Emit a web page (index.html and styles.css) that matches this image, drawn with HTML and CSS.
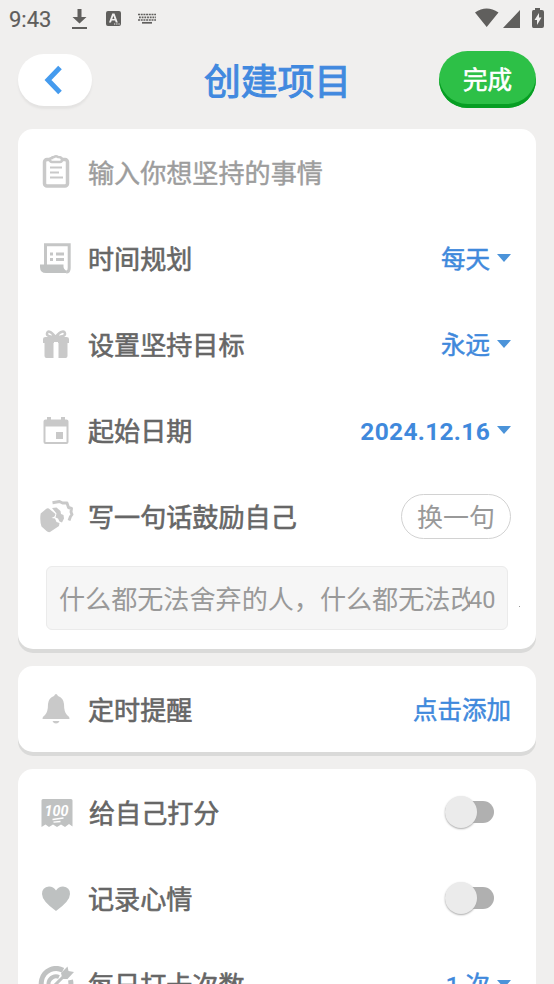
FILE: index.html
```html
<!DOCTYPE html>
<html lang="zh-CN">
<head>
<meta charset="utf-8">
<title>创建项目</title>
<link rel="stylesheet" href="styles.css">
</head>
<body>
<div class="screen">
  <div class="status">
    <span class="clock">9:43</span>
    <svg class="status-left" width="90" height="24" viewBox="0 0 90 24">
      <g fill="#605f5d">
        <path d="M5.500 2h4v8h5L7.500 16.500.5 10h5zM0 20h15v2H0z"/>
        <path fill-rule="evenodd" d="M36 4h11q2 0 2 2v11q0 2-2 2H36q-2 0-2-2V6q0-2 2-2zm4.300 2.500L37 15.500h2l.7-2h3.400l.7 2h2L42.500 6.500zm1.100 2.200 1.100 3.300h-2.200zM42 16.500v1.100h1.300v-1.100zm2.200 0v1.100h1.300v-1.100zm2.200 0v1.100h1.300v-1.100z"/>
      </g>
      <g fill="none" stroke="#605f5d" stroke-width="1.700">
        <path d="M66 7.500h18M66 13h18" stroke-dasharray="2 .7"/>
        <path d="M67 10.300h17" stroke-dasharray="1.800 .9"/>
        <path d="M70 15.800h10"/>
      </g>
    </svg>
    <svg class="status-right" width="72" height="24" viewBox="0 0 72 24">
      <g fill="#605f5d">
        <path d="M0 6.500Q11.500-1.500 23.500 6.500L11.700 21zM28 22 45 4v18z"/>
        <path fill-rule="evenodd" d="M60 2h5v2h2q2 0 2 2v14q0 2-2 2h-8.500q-1.500 0-1.500-2V6q0-2 1.500-2H60zm4 5-4.500 7h2.500v5l4.500-7.500H64z"/>
      </g>
    </svg>
  </div>

  <header class="header">
    <div class="back"><svg width="20" height="30" viewBox="0 0 20 30"><path d="M16 2.500 4 15l12 12.500" fill="none" stroke="#459bee" stroke-width="5"/></svg></div>
    <h1 class="title">创建项目</h1>
    <div class="done">完成</div>
  </header>

  <section class="card">
    <div class="row">
      <svg class="icon" viewBox="0 0 36 36"><g fill="none" stroke="#c9c9c9" stroke-width="3.500"><rect x="6.500" y="5.500" width="23" height="26.500" rx="2.500"/><path stroke-width="2" d="M12 13.500h12M12 18.500h9M12 23.500h13"/><path fill="#fff" stroke-width="2.600" d="M14 4q0-1 2-1 2-1.500 4 0 4 0 4 2.500T22 8h-8q-2 0-2-2.500Q12 4 14 4z"/></g></svg>
      <span class="label hint">输入你想坚持的事情</span>
    </div>
    <div class="row">
      <svg class="icon" viewBox="0 0 36 36"><path fill="none" stroke="#c5c6c6" stroke-width="3" d="M7.500 25V4.800h23.700V28q0 4-3 4"/><path fill="#c0c2c2" d="M2 24.500h23.500q-.5 4.500 3 6.500v2H8q-6 0-6-6z"/><path stroke="#c5c6c6" stroke-width="3" d="M12 14h3m3 0h8m-14 5.500h3m3 0h8"/></svg>
      <span class="label">时间规划</span>
      <span class="value">每天</span><i class="caret"></i>
    </div>
    <div class="row">
      <svg class="icon" viewBox="0 0 36 36"><g fill="#c9c9c9"><path d="M7.500 11h21q2.500 0 2.500 2v4H20v-1h-4v1H5v-4q0-2 2.500-2zM6.500 17H15.500v15H8.500q-2 0-2-2zM20.500 17h9v13q0 2-2 2h-7z"/></g><path d="M17.500 11C12 4 9.500 5 9 7.500S12 11 17.500 11 27.500 10 27 7.500 23 4 17.500 11z" fill="none" stroke="#c9c9c9" stroke-width="2.500"/></svg>
      <span class="label">设置坚持目标</span>
      <span class="value">永远</span><i class="caret"></i>
    </div>
    <div class="row">
      <svg class="icon" viewBox="0 0 36 36"><path fill="#c9c9c9" fill-rule="evenodd" d="M9 5h4v2.500h10V5h4v2.500h1.500q2 0 2 2V30q0 2-2 2h-21q-2 0-2-2V9.500q0-2 2-2H9zM7.500 14.500V30h21V14.500zM18 20h7v7h-7z"/></svg>
      <span class="label">起始日期</span>
      <span class="value date">2024.12.16</span><i class="caret"></i>
    </div>
    <div class="row">
      <svg class="icon" viewBox="0 0 36 36"><path fill="#c9c9c9" d="M2.700 15.500 8 11q2-1.500 4 .5l5.500 4.500-1 2.500-3 1.500 3.500.5 1.500 3.500 3 1-.5 3L12 34q-2 .5-3.500-1L3.500 28.500Q1.500 22 2.700 15.500z"/><path fill="#c9c9c9" d="m14 10 4.500-.5 4 3.500.5 3 2.500 1 .5 3.500-2 4-2.500-1-1.500-3-2.500-1 1-4z"/><path fill="none" stroke="#c9c9c9" stroke-width="2.900" stroke-linejoin="round" d="m14.500 4.700 7-1.200 3 1.500h4.500l1.500 4.500 3 1-.5 3.500 1 2.500-1.500 2-1.500 4"/></svg>
      <span class="label">写一句话鼓励自己</span>
      <span class="swap">换一句</span>
    </div>
    <div class="quote-line">
      <div class="quote"><span class="quote-text">什么都无法舍弃的人，什么都无法改变</span><span class="count">40</span></div>
      <i class="speck"></i>
    </div>
  </section>

  <section class="card">
    <div class="row">
      <svg class="icon" viewBox="0 0 36 36"><path fill="#c9c9c9" d="M16 5q2-4 4 0 5.500 2 6 8 0 8 3 11 3 2 2.500 4h-27q-.5-2 2.500-4 3-3 3-11 .5-6 6-8zM14.500 30h7q-1 2.500-3.500 2.500t-3.500-2.500z"/></svg>
      <span class="label">定时提醒</span>
      <span class="value">点击添加</span>
    </div>
  </section>

  <section class="card last">
    <div class="row">
      <svg class="icon" viewBox="0 0 36 36"><path fill="#c0c2c2" d="M5 5h28q1.500 0 1.500 1.500v26L31 30l-4 3-4-2.500-4 2.500-4-2.500-4 2.500-3.500-2.500-4 2.500V6.500Q3.500 5 5 5z"/><text x="6.500" y="21.500" class="score" textLength="24" lengthAdjust="spacingAndGlyphs">100</text><path d="m14.500 25.500 11-1.500m-10 4.200 7-.7" stroke="#fff" stroke-width="1.300"/></svg>
      <span class="label nudge">给自己打分</span>
      <span class="switch"><i class="knob"></i></span>
    </div>
    <div class="row">
      <svg class="icon" viewBox="0 0 36 36"><path fill="#bec1c1" d="M18 31Q4 21 4 14q0-7 7-7.500 4.500 0 7 4 2.500-4 7-4 7 .5 7 7.500 0 7-14 17z"/></svg>
      <span class="label">记录心情</span>
      <span class="switch"><i class="knob"></i></span>
    </div>
    <div class="row">
      <svg class="icon" viewBox="0 0 36 36"><g fill="none" stroke="#c0c2c2"><path stroke-width="5" d="M25 4.200A14.800 14.800 0 1 0 32.500 14"/><path stroke-width="4" d="M21 11a7.500 7.500 0 1 0 4.500 7"/><path stroke-width="3" d="m16 20 12-12"/></g><path fill="#c0c2c2" d="m23 7 6.500-6.500L30.500 5l5.500 1-6.500 7h-5z"/></svg>
      <span class="label">每日打卡次数</span>
      <span class="value">1 次</span><i class="caret"></i>
    </div>
  </section>
</div>
</body>
</html>
```
FILE: styles.css
```css
* { box-sizing: border-box; }
html, body { margin: 0; height: 984px; overflow: hidden; }
body {
  background: #f0efee;
  font-family: Roboto, "Noto Sans CJK SC", sans-serif;
  color: #666;
}
svg { display: block; }
.screen { height: 984px; overflow: hidden; padding: 0 18px; }
.status { height: 51px; margin: 0 -9px; display: flex; align-items: flex-start; padding-top: 7px; }
.clock { width: 63px; font-size: 22px; line-height: 25px; color: #5f5e5c; -webkit-text-stroke: .2px #5f5e5c; }
.status-right { margin: -1px -2px 0 auto; }
.header { height: 78px; display: flex; align-items: flex-start; justify-content: space-between; }
.back {
  width: 74px; height: 52px; margin-top: 3px; border-radius: 26px; background: #fff;
  box-shadow: 0 3px 2px #e4e3e2; display: flex; align-items: center; justify-content: center;
  padding-right: 2px;
}
.title {
  margin: 0 0 0 24px; padding-top: 3px; font-size: 36.800px; line-height: 58px; font-weight: 400; color: #4189df;
  -webkit-text-stroke: 1px #4189df;
}
.done {
  width: 97px; height: 57px; border-radius: 29px; background: #2dc047;
  box-shadow: inset 0 -4px #079e23; color: #fff; font-size: 24.500px; line-height: 57px;
  padding-top: 1px; text-align: center; -webkit-text-stroke: .6px #fff;
}
.card {
  width: 518px; margin-bottom: 17px; border-radius: 15px; background: #fff;
  box-shadow: 0 4px #dadad9;
}
.row { height: 86px; padding: 0 25px 0 20px; display: flex; align-items: center; }
.icon { width: 36px; height: 36px; flex: none; }
.label {
  margin: 0 auto 0 14px; padding-top: 3px; font-size: 26.100px; line-height: 38px; white-space: nowrap;
  -webkit-text-stroke: .6px #666;
}
.nudge { padding-left: 1px; }
.hint { color: #9d9d9d; -webkit-text-stroke: .45px #9d9d9d; }
.value { padding-top: 3px; font-size: 24.500px; line-height: 36px; color: #3f89dc; -webkit-text-stroke: .5px #3f89dc; }
.date { font-weight: 700; letter-spacing: .3px; -webkit-text-stroke: 0; }
.caret {
  width: 14px; height: 8px; margin-left: 7px; background: #4b93d9;
  clip-path: polygon(0 0, 100% 0, 50% 100%);
}
.swap {
  width: 110px; height: 45px; border: 1px solid #d2d2d2; border-radius: 23px;
  padding-top: 2px; font-size: 26px; line-height: 43px; text-align: center; color: #999;
}
.quote-line { height: 90px; padding: 7px 0 0 28px; display: flex; }
.quote {
  width: 462px; height: 64px; border: 1px solid #ebebeb; border-radius: 6px; background: #f6f6f6;
  padding: 4px 11px 0 12px; display: flex; align-items: center; color: #999;
}
.quote-text { width: 411px; flex: none; overflow: hidden; white-space: nowrap; font-size: 26.100px; line-height: 40px; }
.count { margin-left: -1px; font-size: 23.500px; line-height: 40px; }
.speck { width: 1px; height: 1px; margin: 40px 0 0 11px; background: #999; }
.switch {
  width: 49px; height: 22px; margin-right: 17px; border-radius: 11px; background: #b0b0b0;
  display: flex; align-items: center;
}
.knob {
  width: 32px; height: 32px; flex: none; margin-left: 0; border-radius: 50%; background: #ebebeb;
  box-shadow: 0 1px 2px #aaa;
}
.score { font: italic 700 15px Roboto, sans-serif; fill: #fff; }
.last { height: 258px; margin-bottom: 0; }
```
